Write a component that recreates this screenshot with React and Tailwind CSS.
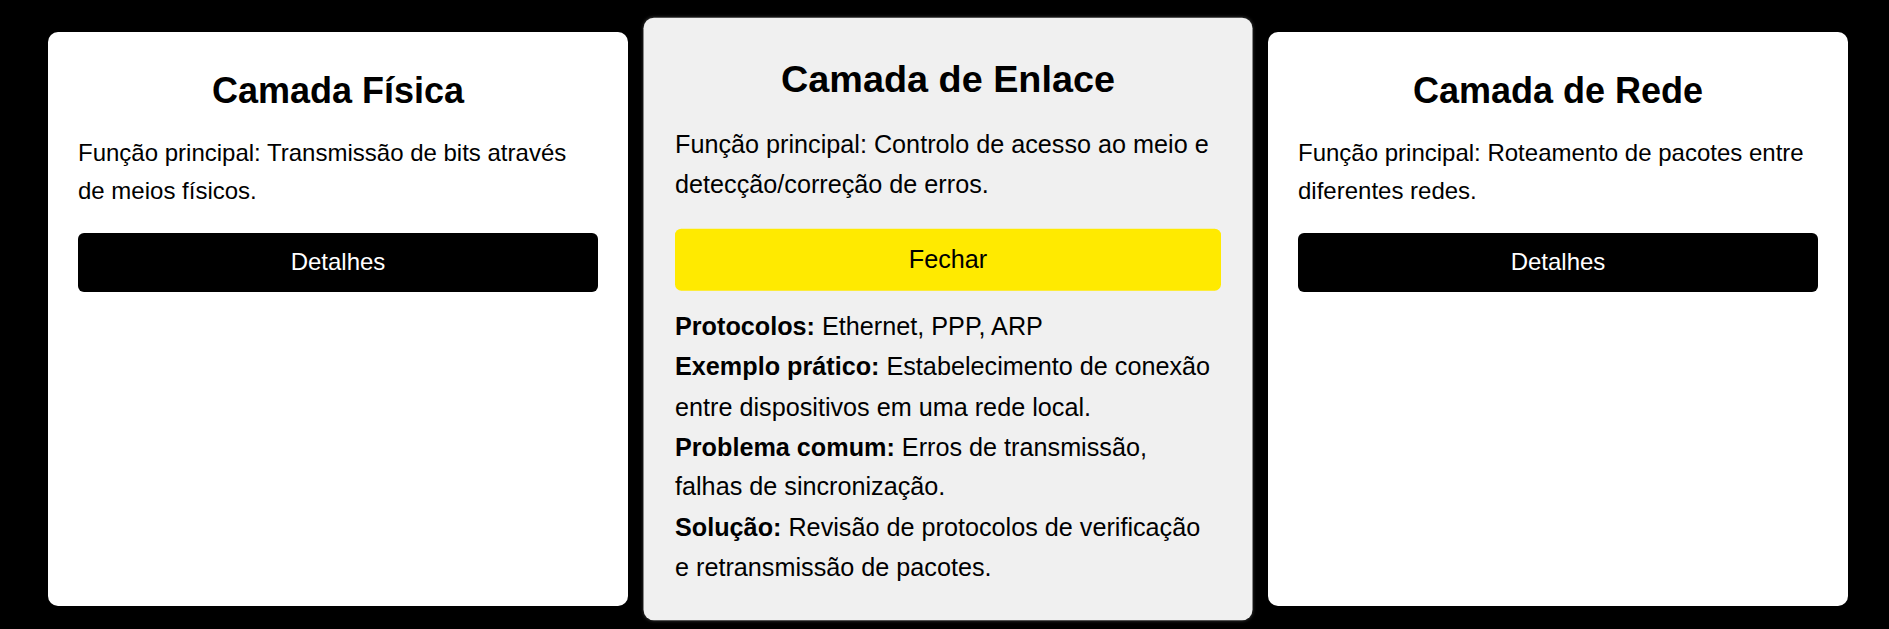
import React from 'react';

const layers = [
    {
        title: 'Camada Física',
        func: 'Função principal: Transmissão de bits através de meios físicos.',
    },
    {
        title: 'Camada de Enlace',
        func: 'Função principal: Controlo de acesso ao meio e detecção/correção de erros.',
        open: true,
        details: [
            ['Protocolos:', 'Ethernet, PPP, ARP'],
            ['Exemplo prático:', 'Estabelecimento de conexão entre dispositivos em uma rede local.'],
            ['Problema comum:', 'Erros de transmissão, falhas de sincronização.'],
            ['Solução:', 'Revisão de protocolos de verificação e retransmissão de pacotes.'],
        ],
    },
    {
        title: 'Camada de Rede',
        func: 'Função principal: Roteamento de pacotes entre diferentes redes.',
    },
];

const LayerCard = ({ layer }) => {
    return (
        <div
            className={
                layer.open
                    ? 'w-[580px] shrink-0 rounded-[10px] bg-[#f0f0f0] px-[30px] pt-[30px] pb-[30px] scale-[1.05] shadow-[0_0_3px_rgba(255,255,255,0.2)]'
                    : 'w-[580px] shrink-0 rounded-[10px] bg-white px-[30px] pt-[30px] pb-[30px]'
            }
        >
            <h2 className="text-center text-[36px] font-bold leading-[1.6]">{layer.title}</h2>
            <p className="mt-[14px] text-[24px] leading-[1.6]">{layer.func}</p>
            <button
                className={
                    layer.open
                        ? 'mt-[23px] w-full rounded-[6px] bg-[#ffea00] py-[10px] text-[24px] leading-[1.6] text-black'
                        : 'mt-[23px] w-full rounded-[6px] bg-black py-[10px] text-[24px] leading-[1.6] text-white'
                }
            >
                {layer.open ? 'Fechar' : 'Detalhes'}
            </button>
            {layer.open && (
                <div className="mt-[15px] text-[24px] leading-[1.6]">
                    {layer.details.map(([label, text]) => (
                        <p key={label}>
                            <strong className="font-bold">{label}</strong> {text}
                        </p>
                    ))}
                </div>
            )}
        </div>
    );
};

const App = () => {
    return (
        <div
            className="h-[629px] w-full overflow-hidden bg-black pl-[48px] pt-[32px] text-black"
            style={{ fontFamily: '"Liberation Sans", Arial, sans-serif' }}
        >
            <div className="flex items-stretch gap-[30px]">
                {layers.map((layer) => (
                    <LayerCard key={layer.title} layer={layer} />
                ))}
            </div>
        </div>
    );
};

export default App;
